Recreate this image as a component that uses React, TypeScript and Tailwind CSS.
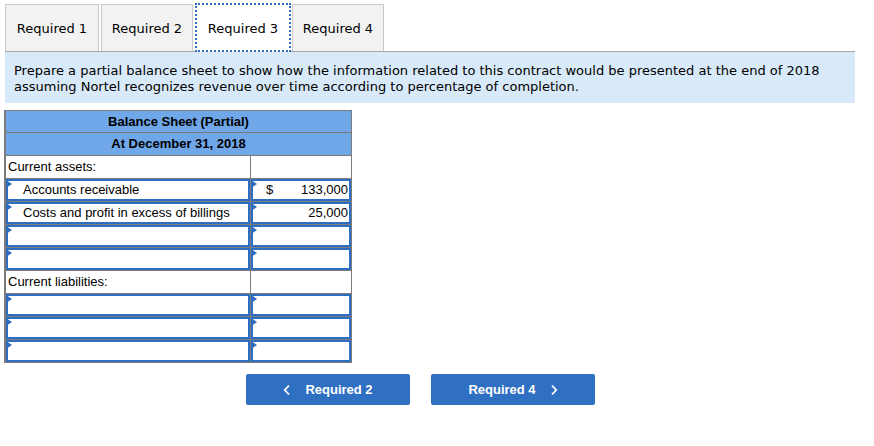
import React from 'react';

const tabs = ['Required 1', 'Required 2', 'Required 3', 'Required 4'];
const tabWidths = ['w-[94px] mr-[2px]', 'w-[92px] mr-[2px]', 'w-[96px] mr-[1px]', 'w-[92px]'];

type Row =
  | { kind: 'label'; text: string }
  | { kind: 'input'; text?: string; dollar?: boolean; amount?: string };

const rows: Row[] = [
  { kind: 'label', text: 'Current assets:' },
  { kind: 'input', text: 'Accounts receivable', dollar: true, amount: '133,000' },
  { kind: 'input', text: 'Costs and profit in excess of billings', amount: '25,000' },
  { kind: 'input' },
  { kind: 'input' },
  { kind: 'label', text: 'Current liabilities:' },
  { kind: 'input' },
  { kind: 'input' },
  { kind: 'input' },
];

// little blue flag in the corner of every input cell
const Flag = () => (
  <svg className="absolute -left-[2px] -top-[1px]" width="7" height="9" viewBox="0 0 7 9">
    <polygon points="0,0 6,4 0,8" fill="#2d6cc0" />
  </svg>
);

const InputCell = ({ children, className }: { children?: React.ReactNode; className?: string }) => (
  <div className={`relative h-full border-2 border-[#2e6ec2] flex items-center ${className || ''}`}>
    <Flag />
    {children}
  </div>
);

export default function App() {
  return (
    <div className="w-[874px] h-[446px] bg-white relative">
      {/* tab strip */}
      <div className="pt-[4px] pl-[5px] w-[855px]">
        <div className="flex items-end border-b border-[#a8a8a8] h-[48px]">
          {tabs.map((t, i) => {
            const active = i === 2;
            return (
              <div
                key={t}
                className={`${tabWidths[i]} flex items-center justify-center text-[13px] text-black ${
                  active
                    ? 'h-[49px] -mb-[1px] bg-white border-2 border-dotted border-[#2e6ec2]'
                    : 'h-[47px] bg-[#f2f2f2] border border-b-0 border-[#c9c9c9]'
                }`}
                style={{ fontFamily: '"DejaVu Sans", Verdana, sans-serif' }}
              >
                <span className={active ? 'pt-[2px]' : 'pt-[1px]'}>{t}</span>
              </div>
            );
          })}
        </div>
      </div>

      {/* instructions */}
      <div
        className="ml-[5px] w-[850px] h-[51px] bg-[#d8eaf9] pl-[9px] pt-[11px] text-[13px] leading-[16px] text-black"
        style={{ fontFamily: '"DejaVu Sans", Verdana, sans-serif' }}
      >
        Prepare a partial balance sheet to show how the information related to this contract would be presented at the end of 2018
        <br />
        assuming Nortel recognizes revenue over time according to percentage of completion.
      </div>

      {/* balance sheet */}
      <div
        className="mt-[7px] ml-[4px] w-[348px] border border-l-2 border-[#7c7c7c] text-[13px] text-black"
        style={{ fontFamily: '"Liberation Sans", Arial, sans-serif' }}
      >
        <div className="h-[22px] bg-[#6fa7e9] flex items-center justify-center font-bold border-b border-[#7c7c7c]">
          Balance Sheet (Partial)
        </div>
        <div className="h-[23px] bg-[#6fa7e9] flex items-center justify-center font-bold border-b border-[#7c7c7c]">
          At December 31, 2018
        </div>
        {rows.map((r, i) => {
          const last = i === rows.length - 1;
          return (
            <div
              key={i}
              className={`flex ${last ? 'h-[22px]' : 'h-[23px] border-b border-[#7c7c7c]'}`}
            >
              {r.kind === 'label' ? (
                <>
                  <div className="w-[245px] border-r border-[#7c7c7c] flex items-center pl-[2px]">{r.text}</div>
                  <div className="flex-1" />
                </>
              ) : (
                <>
                  <div className="w-[245px] border-r border-[#7c7c7c]">
                    <InputCell className="pl-[15px]">{r.text}</InputCell>
                  </div>
                  <div className="flex-1">
                    <InputCell className="pl-[13px] pr-[1px]">
                      {r.dollar && <span>$</span>}
                      {r.amount && <span className="ml-auto">{r.amount}</span>}
                    </InputCell>
                  </div>
                </>
              )}
            </div>
          );
        })}
      </div>

      {/* nav buttons */}
      <div
        className="mt-[11px] ml-[246px] flex gap-[21px] text-[13px] font-bold text-white"
        style={{ fontFamily: '"Liberation Sans", Arial, sans-serif' }}
      >
        <button className="w-[164px] h-[31px] rounded-[2px] bg-[#2f70c2] flex items-center justify-center gap-[14px]">
          <svg width="8" height="12" viewBox="0 0 8 12" fill="none" stroke="white" strokeWidth="1.8">
            <path d="M6 1.5 L1.8 6 L6 10.5" />
          </svg>
          <span>Required 2</span>
        </button>
        <button className="w-[164px] h-[31px] rounded-[2px] bg-[#2f70c2] flex items-center justify-center gap-[14px]">
          <span>Required 4</span>
          <svg width="8" height="12" viewBox="0 0 8 12" fill="none" stroke="white" strokeWidth="1.8">
            <path d="M2 1.5 L6.2 6 L2 10.5" />
          </svg>
        </button>
      </div>
    </div>
  );
}
